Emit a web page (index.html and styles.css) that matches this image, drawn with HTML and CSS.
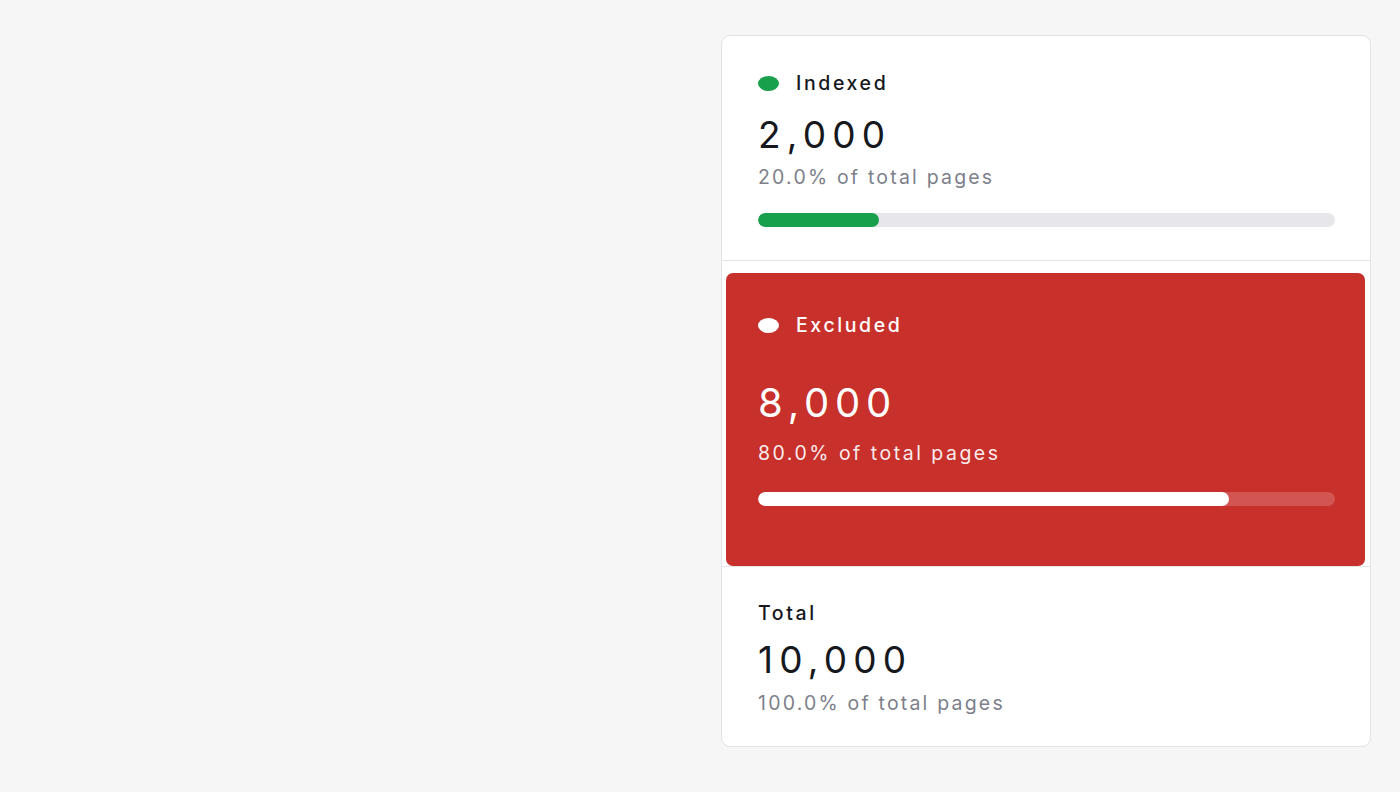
FILE: index.html
```html
<!DOCTYPE html>
<html lang="en">
<head>
<meta charset="utf-8">
<title>Index coverage</title>
<link rel="stylesheet" href="styles.css">
</head>
<body>
  <main class="page">
    <section class="coverage-card">
      <div class="stat-row">
        <div class="stat">
          <div class="stat-head">
            <span class="dot dot--green"></span>
            <span class="stat-label">Indexed</span>
          </div>
          <div class="stat-value">2,000</div>
          <div class="stat-sub">20.0% of total pages</div>
          <div class="bar"><div class="bar-fill bar-fill--green" style="width: 21%"></div></div>
        </div>
      </div>

      <div class="stat-row stat-row--active">
        <div class="stat stat--active">
          <div class="stat-head">
            <span class="dot dot--white"></span>
            <span class="stat-label">Excluded</span>
          </div>
          <div class="stat-value">8,000</div>
          <div class="stat-sub">80.0% of total pages</div>
          <div class="bar"><div class="bar-fill bar-fill--white" style="width: 81.6%"></div></div>
        </div>
      </div>

      <div class="stat-row stat-row--last">
        <div class="stat stat--total">
          <div class="stat-head">
            <span class="stat-label">Total</span>
          </div>
          <div class="stat-value">10,000</div>
          <div class="stat-sub">100.0% of total pages</div>
        </div>
      </div>
    </section>
  </main>
</body>
</html>
```

FILE: styles.css
```css
* {
  box-sizing: border-box;
}

html,
body {
  margin: 0;
  height: 100%;
}

body {
  background: #f6f6f6;
  font-family: Inter, "Noto Sans", "Liberation Sans", sans-serif;
  color: #16181d;
}

.page {
  display: flex;
  justify-content: flex-end;
  padding: 35px 29px 0 0;
}

.coverage-card {
  width: 650px;
  background: #ffffff;
  border: 1px solid #e2e2e7;
  border-radius: 9px;
  overflow: hidden;
}

.stat-row {
  border-bottom: 1px solid #e6e6ea;
}

.stat-row--active {
  padding: 12px 5px 0 4px;
}

.stat-row--last {
  border-bottom: none;
}

.stat {
  padding: 36px 35px 33px 36px;
}

.stat-head {
  display: flex;
  align-items: center;
  gap: 17px;
  height: 22px;
}

.dot {
  width: 21px;
  height: 15px;
  border-radius: 50%;
  flex: none;
}

.dot--green {
  background: #18a04c;
}

.dot--white {
  background: #ffffff;
}

.stat-label {
  font-size: 19.5px;
  line-height: 22px;
  font-weight: 450;
  letter-spacing: 2.6px;
}

.stat-value {
  margin-top: 19px;
  font-size: 37px;
  line-height: 44px;
  font-weight: 420;
  letter-spacing: 6.2px;
}

.stat-sub {
  margin-top: 8px;
  font-size: 19.5px;
  line-height: 24px;
  color: #7c7f8a;
  letter-spacing: 2.2px;
}

.bar {
  margin-top: 24px;
  height: 14px;
  border-radius: 7px;
  background: #e7e7eb;
  overflow: hidden;
}

.bar-fill {
  height: 100%;
  border-radius: 7px;
}

.bar-fill--green {
  background: #18a04c;
}

.bar-fill--white {
  background: #ffffff;
}

/* Selected category: filled red panel */
.stat--active {
  background: #c8302b;
  color: #ffffff;
  border-radius: 7px;
  padding: 41px 30px 60px 32px;
}

.stat--active .stat-value {
  margin-top: 43px;
  font-size: 40px;
  line-height: 48px;
  letter-spacing: 5.8px;
}

.stat--active .stat-sub {
  margin-top: 14px;
  color: rgba(255, 255, 255, 0.93);
  letter-spacing: 2.5px;
}

.stat--active .bar {
  margin-top: 27px;
  background: rgba(255, 255, 255, 0.18);
}

.stat--total {
  padding: 35px 35px 31px 36px;
}

.stat--total .stat-value {
  margin-top: 14px;
}

.stat--total .stat-sub {
  margin-top: 9px;
}
```
